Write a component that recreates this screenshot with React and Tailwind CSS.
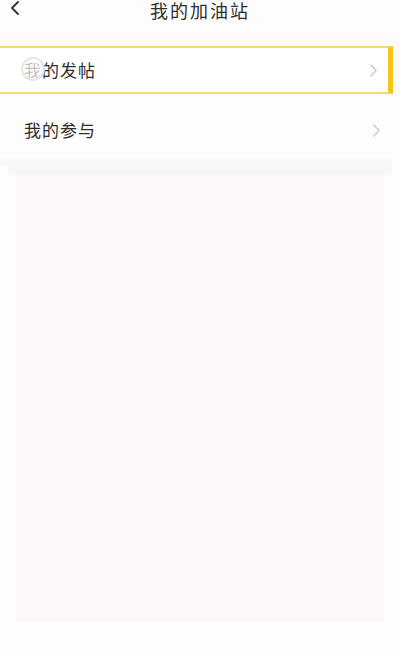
import React from "react";

const font = { fontFamily: '"Noto Sans CJK SC", "Noto Sans", sans-serif' };

function Chevron({ className }) {
  return (
    <svg className={className} viewBox="0 0 10 16" fill="none" stroke="currentColor" strokeWidth="1.6" strokeLinecap="round" strokeLinejoin="round">
      <path d="M2 2l6 6-6 6" />
    </svg>
  );
}

export default function App() {
  return (
    <div className="w-[400px] h-[656px] bg-[#fdfdfd] flex flex-col overflow-hidden" style={font}>
      <div className="h-[31px] relative flex items-start justify-center">
        <svg className="absolute left-[10px] top-[1px] w-[10px] h-[14px] text-[#333]" viewBox="0 0 10 14" fill="none" stroke="currentColor" strokeWidth="1.9" strokeLinecap="round" strokeLinejoin="round">
          <path d="M8 1L2 7l6 6" />
        </svg>
        <span className="text-[18px] leading-[20px] tracking-[2px] text-[#2e2e2e]">我的加油站</span>
      </div>
      <div className="h-[10px] bg-[#fdf9fc]" />
      <div className="h-[5px]" />
      <div className="relative h-[48px] mr-[7px] border-2 border-l-0 border-[#f8d773] border-r-[5px] border-r-[#f5c518] flex items-center pl-[24px] pr-[10px] bg-white">
        <span className="text-[17px] tracking-[1px] text-[#2e2e2e]">我的发帖</span>
        <div className="absolute left-[21px] top-[9px] w-[24px] h-[24px] rounded-full border-2 border-[#e6e6e6] bg-white/70" />
        <Chevron className="ml-auto w-[9px] h-[15px] text-[#c8c8c8]" />
      </div>
      <div className="h-[12px]" />
      <div className="h-[48px] mr-[7px] flex items-center pl-[24px] pr-[12px]">
        <span className="text-[17px] tracking-[1px] text-[#2e2e2e]">我的参与</span>
        <Chevron className="ml-auto w-[9px] h-[15px] text-[#c8c8c8]" />
      </div>
      <div className="h-[5px]" />
      <div className="h-[7px] mr-[8px] bg-[#f7f7f7]" />
      <div className="h-[9px] ml-[8px] mr-[8px] bg-[#f7f7f7]" />
      <div className="h-[446px] mx-[16px] bg-[#fff8fb]" />
    </div>
  );
}
